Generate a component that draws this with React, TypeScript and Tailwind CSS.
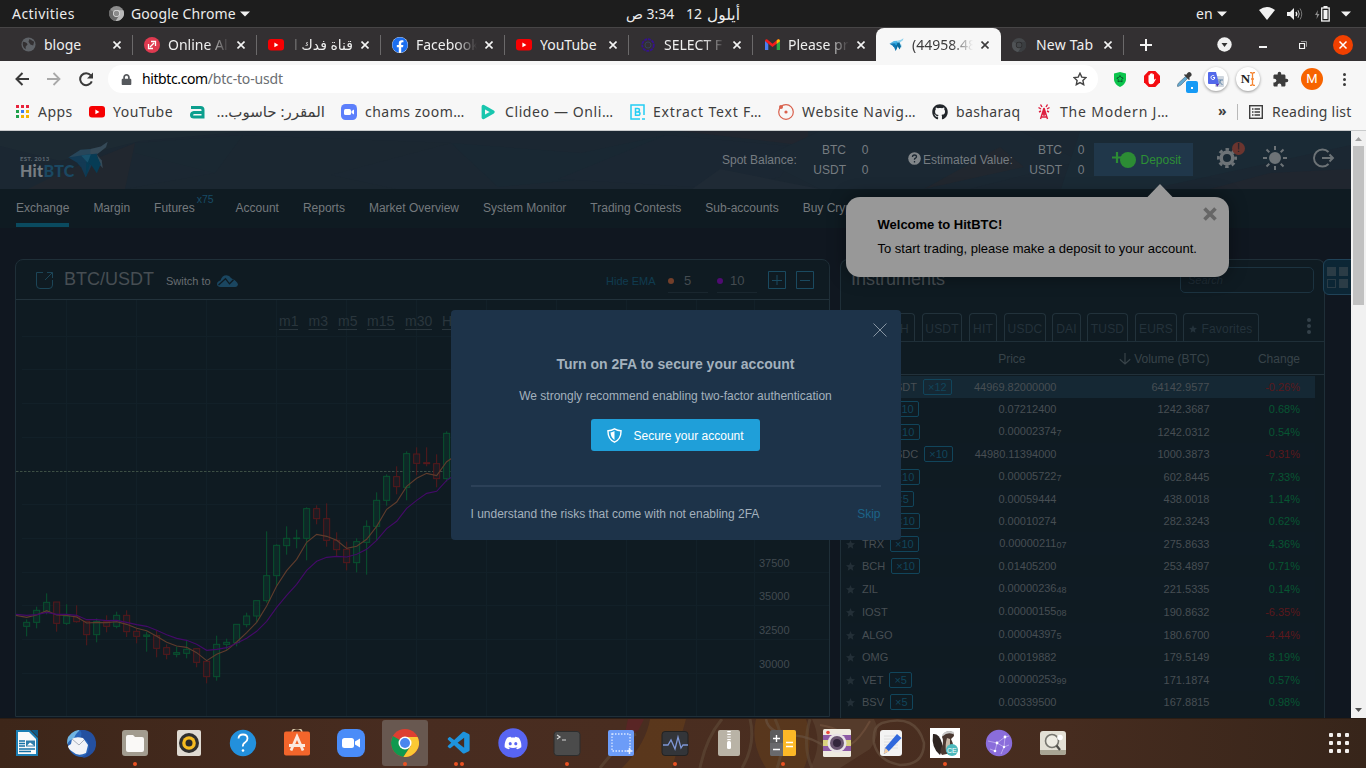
import React from "react";
import { FaGithub, FaFacebook, FaDiscord, FaLock } from "react-icons/fa";
import { MdExtension } from "react-icons/md";
import { VscVscode } from "react-icons/vsc";

const UI = "font-['Noto_Sans','DejaVu_Sans',sans-serif]";

/* ---------- shared glyphs ---------- */
const Caret = ({ className = "" }: { className?: string }) => (
  <svg className={className} width="10" height="6" viewBox="0 0 10 6"><path d="M0 .5h10L5 5.5z" fill="#f2f2f2" /></svg>
);

const ChromeLogo = ({ size, c = ["#dd3f31", "#fbc934", "#10994f", "#4b86ee"], ring = "#fff" }: { size: number; c?: string[]; ring?: string }) => (
  <svg width={size} height={size} viewBox="0 0 28 28">
    <circle cx="14" cy="14" r="14" fill={c[0]} />
    <path d="M14 14L1.9 7A14 14 0 0 0 12.4 27.9L19.5 17z" fill={c[2]} />
    <path d="M14 14l5.6 3.2-7.2 10.7A14 14 0 0 0 26.6 8H14z" fill={c[1]} />
    <circle cx="14" cy="14" r="6.5" fill={ring} />
    <circle cx="14" cy="14" r="5" fill={c[3]} />
  </svg>
);

const YT = () => (
  <svg width="16" height="12" viewBox="0 0 16 12"><rect width="16" height="11.5" rx="3" fill="#f60002" /><path d="M6.4 3.6v4.6l4-2.3z" fill="#fff" /></svg>
);

const Bird = ({ w, h, dim = false }: { w: number; h: number; dim?: boolean }) => {
  const c = dim ? ["#27465a", "#133a54", "#17506b", "#063c55", "#354a58"] : ["#53b8e8", "#1179b5", "#26a3dd", "#086a9c", "#8fd2ee"];
  return (
    <svg width={w} height={h} viewBox="200 26 122 112">
      <path d="M201 76l37-24 30-2 8 18-26 6z" fill={c[0]} />
      <path d="M268 50l32-8 21-14-5 17-28 22-20 2z" fill={c[4]} />
      <path d="M201 76l49-8 40-4-8 30-42 12-12-14z" fill={c[1]} />
      <path d="M288 67l15 18 3 24-10-12z" fill={c[4]} />
      <path d="M256 68l30-2 14 30-12 28-16-24-16-10z" fill={c[3]} />
      <path d="M240 70l30-4-10 26z" fill={c[2]} />
      <path d="M228 92l28-2 16 10-18 37-14-32z" fill={c[1]} />
      <path d="M256 90l10 8-12 39z" fill={c[3]} />
    </svg>
  );
};

/* ---------- desktop top bar ---------- */
const TopBar = () => (
  <div className="flex h-[27px] shrink-0 items-center bg-[#1d1d1d] text-[14px] text-[#ececec]">
    <div className="ml-[12px] w-[97px] whitespace-nowrap tracking-[0.45px]">Activities</div>
    <ChromeLogo size={15} c={["#8c8c8c", "#b9b9b9", "#6a6a6a", "#8b8b8b"]} ring="#e0e0e0" />
    <div className="ml-[7px] w-[104px] whitespace-nowrap tracking-[0.1px]">Google Chrome</div>
    <Caret className="ml-[5px]" />
    <div dir="rtl" className="ml-[376px] flex w-[114px] items-center justify-between whitespace-nowrap text-[14px] leading-[18px]"><span className="flex items-center gap-[5px]"><span className="text-[15.500px]">أيلول</span><span>12</span></span><span className="tracking-[0.15px]">3:34 ص</span></div>
    <div className="ml-[456px] w-[18px]">en</div>
    <Caret className="ml-[3px]" />
    <svg className="ml-[32px]" width="16" height="13" viewBox="0 0 16 13"><path d="M0 3Q8-3 16 3L8 13z" fill="#f2f2f2" /></svg>
    <svg className="ml-[12px]" width="17" height="14" viewBox="0 0 17 14" fill="none" stroke="#f2f2f2"><path d="M0 5h3l4-4v12l-4-4H0z" fill="#f2f2f2" stroke="none" /><path d="M9 5q1.5 2 0 4" strokeWidth="1.5" /><path d="M11 3.200q2.500 3.800 0 7.600" stroke="#bbb" /><path d="M13 1.500q3.500 5.500 0 11" stroke="#777" /></svg>
    <svg className="ml-[11px]" width="15" height="16" viewBox="0 0 15 16"><path d="M3 4L0 9h2l-.5 4 3-5H2.400z" fill="#8d8d8d" /><path d="M8.500 0h4v2h-4z" fill="#f2f2f2" /><rect x="6.700" y="2" width="7.500" height="13" fill="none" stroke="#f2f2f2" strokeWidth="1.300" /><rect x="8.500" y="4" width="4" height="9" fill="#f2f2f2" /></svg>
    <Caret className="ml-[11px]" />
  </div>
);

/* ---------- browser tabs ---------- */
const globe = <svg width="15" height="15" viewBox="0 0 16 16"><circle cx="8" cy="8" r="7.500" fill="#5f6368" /><path d="M2 5q4 0 5 3l-2 2v3q-4-2-3-8M9 2l5 3-1 4-3-1-2-3z" fill="#333032" /></svg>;
const tabs: { icon: React.ReactNode; title: React.ReactNode; rtl?: boolean; active?: boolean }[] = [
  { icon: globe, title: "bloge" },
  { icon: <svg width="16" height="16" viewBox="0 0 16 16"><circle cx="8" cy="8" r="8" fill="#df3a50" /><path d="M4.500 7v4.500H9M11.500 9V4.500H7M6 10l4-4" fill="none" stroke="#fff" strokeWidth="1.300" /></svg>, title: "Online Al" },
  { icon: <YT />, title: "قناة فدك ا", rtl: true },
  { icon: <span className="rounded-full bg-white"><FaFacebook size={16} color="#1b6ef0" /></span>, title: "Facebook" },
  { icon: <YT />, title: "YouTube" },
  { icon: <svg width="14" height="14" viewBox="0 0 14 14" fill="none" stroke="#35128c"><circle cx="7" cy="7" r="5.800" strokeWidth="1.800" strokeDasharray="3 .8" /><circle cx="7" cy="7" r="3" stroke="#34405c" /></svg>, title: "SELECT F" },
  { icon: <svg width="15" height="12" viewBox="0 0 15 12"><path d="M0 1.500V11h3.300V5z" fill="#4b7df0" /><path d="M15 1.500V11h-3.300V5z" fill="#28a745" /><path d="M0 2q0-2 2-1.700l5.500 4.500L13 .3Q15 0 15 2l-7.500 6z" fill="#f21c1c" /><path d="M11.700 1.400L13 .3Q15 0 15 2.300l-3.300 2.800z" fill="#fbbc04" /></svg>, title: "Please pr" },
  { icon: <Bird w={15} h={13} />, title: "(44958.48", active: true },
  { icon: <ChromeLogo size={14} c={["#44474a", "#3b3e41", "#505356", "#44474a"]} ring="#2c2b2c" />, title: "New Tab" },
];

const TabStrip = () => (
  <div className="flex h-[34px] shrink-0 items-stretch border-t border-[#474546] bg-[#333032] pl-[9px] text-[14px]">
    {tabs.map((t, i) => (
      <div key={i} className={t.active ? "-ml-px -mr-px flex w-[125px] items-center rounded-t-lg bg-[#f7f7f7] pl-px text-[#3c3b3c]" : "flex w-[124px] items-center text-[#efefef]"}>
        <span className="flex w-[38px] justify-center">{t.icon}</span>
        <span dir={t.rtl ? "rtl" : "ltr"} className={(t.rtl ? "[mask-image:linear-gradient(to_left,#000_80%,transparent_100%)]" : i === 1 || i === 3 || i === 5 || i === 6 || i === 7 ? "[mask-image:linear-gradient(to_right,#000_65%,transparent_100%)]" : "") + " -ml-[3px] w-[61px] overflow-hidden whitespace-nowrap" + (i === 8 ? " pl-px tracking-[0.2px]" : "")}>{t.title}</span>
        <svg className="ml-[8px]" width="8" height="8" viewBox="0 0 8 8"><path d="M.5.5l7 7M7.500.5l-7 7" stroke={t.active ? "#3c3b3c" : "#f4f4f4"} strokeWidth="1.600" /></svg>
        {!t.active && i !== 6 && <span className="ml-auto h-[20px] w-px bg-[#6b696a]" />}
      </div>
    ))}
    <div className="flex flex-1 items-center">
      <svg className="ml-[16px]" width="12" height="12" viewBox="0 0 12 12"><path d="M6 0v12M0 6h12" stroke="#f4f4f4" strokeWidth="2" /></svg>
      <svg className="ml-[65px]" width="15" height="15" viewBox="0 0 15 15"><circle cx="7.500" cy="7.500" r="7.200" fill="#f1f1f1" /><path d="M4.500 6h6l-3 4z" fill="#333" /></svg>
      <span className="ml-[27px] mt-[5px] h-[1.500px] w-[8px] bg-[#f4f4f4]" />
      <svg className="ml-[32px]" width="8" height="8" viewBox="0 0 8 8" fill="none" stroke="#f4f4f4"><path d="M.5 2.500h5v5h-5z" strokeWidth="1.200" /><path d="M2 .5h5.500v5.300" stroke="#999" /></svg>
      <svg className="ml-[26px]" width="20" height="20" viewBox="0 0 20 20"><circle cx="10" cy="10" r="10" fill="#f14000" /><path d="M6.500 6.500l7 7M13.500 6.500l-7 7" stroke="#fff" strokeWidth="1.500" /></svg>
    </div>
  </div>
);

/* ---------- address bar ---------- */
const Toolbar = () => (
  <div className="flex h-[33px] shrink-0 items-center bg-[#f7f7f7] pt-[3px] text-[14px]">
    <svg className="ml-[15px]" width="14" height="14" viewBox="0 0 14 14" fill="none" stroke="#3a3a3a" strokeWidth="2"><path d="M14 7H1.500M7.500 1L1.500 7l6 6" /></svg>
    <svg className="ml-[18px]" width="14" height="14" viewBox="0 0 14 14" fill="none" stroke="#a9a9a9" strokeWidth="1.800"><path d="M0 7h12.500M6.500 1l6 6-6 6" /></svg>
    <svg className="ml-[18px]" width="15" height="15" viewBox="0 0 15 15"><path d="M12.800 9.300A6 6 0 1 1 11.800 3.300" fill="none" stroke="#3a3a3a" strokeWidth="2" /><path d="M14 .5v6H8z" fill="#3a3a3a" /></svg>
    <div className="ml-[14px] flex h-[28px] w-[990px] items-center rounded-full bg-white">
      <FaLock className="ml-[13px]" size={11} color="#55585c" />
      <span className="-mt-[2px] ml-[10px] tracking-[-0.4px] text-black">hitbtc.com</span><span className="-mt-[2px] tracking-[-0.17px] text-[#6b6e72]">/btc-to-usdt</span>
      <svg className="ml-auto mr-[11px]" width="14" height="14" viewBox="0 0 14 14"><path d="M7 1.200l1.800 3.900 4.200.5-3.100 2.900.8 4.200L7 10.600l-3.700 2.100.8-4.200L1 5.600l4.200-.5z" fill="none" stroke="#444" strokeWidth="1.400" /></svg>
    </div>
    <div className="ml-[6px] flex items-center">
      <span className="flex w-8 justify-center"><svg width="12" height="15" viewBox="0 0 12 15"><path d="M0 1.500L6 0l6 1.500V8q-1 5-6 7-5-2-6-7z" fill="#0bc44c" /><path d="M6 3.500l1.200 2 2 .5-1.400 1.600.3 2.200L6 9l-2 .8.300-2.200L2.800 6l2-.5z" fill="none" stroke="#075c2c" /></svg></span>
      <span className="flex w-8 justify-center"><svg width="16" height="16" viewBox="0 0 16 16"><path d="M4.700 0h6.600L16 4.700v6.600L11.300 16H4.700L0 11.300V4.700z" fill="#f40d12" /><path d="M4.500 7.500V4.500q.7-1 1.300 0V7 3q.7-1 1.400 0v4-4.500q.7-1 1.400 0V7 3.500q.7-1 1.400 0V9l1-1.200q1-.3.7.8l-2 3.500q-1 1.200-3 1.200-2.200 0-2.200-2.500z" fill="#fff" /></svg></span>
      <span className="relative flex w-8 justify-center"><svg width="15" height="15" viewBox="0 0 15 15"><path d="M8.500 4.500l2 2L4 13l-3 1.500L0 14l1.500-3z" fill="#61a9d2" stroke="#5a7285" strokeWidth=".7" /><path d="M7 3l5 5 1-1-1-1 2.500-2.500Q15 1.500 13.500.5t-3 .5L9 3 8 2z" fill="#3b3b3b" /></svg>
        <span className="absolute left-[18px] top-[9px] flex h-[12px] w-[12px] items-center justify-center rounded-[2px] bg-[#169af5]"><span className="mt-[3px] h-[2px] w-[2px] bg-white" /></span></span>
      <span className="flex w-8 justify-center"><span className="flex h-6 w-6 items-center justify-center rounded-full bg-white shadow-[0_1px_3px_rgba(0,0,0,0.4)]"><svg width="16" height="15" viewBox="0 0 16 15"><rect x="7" y="4" width="9" height="11" rx="1" fill="#cfd6de" /><path d="M10 8h5m-2.500 0q0 3-3 5m1-4l4 4" stroke="#5f83a8" fill="none" /><path d="M1 0h7l3 12H1q-1 0-1-1V1q0-1 1-1z" fill="#5268ea" /><path d="M8 12h3l-2 3z" fill="#5130b0" /><path d="M6.800 5.500q0 2-1.800 2a2 2 0 1 1 1.300-3.500M5 5.500h2" stroke="#fff" fill="none" /></svg></span></span>
      <span className="flex w-8 justify-center"><span className="flex h-6 w-6 items-center justify-center rounded-full bg-white font-['Liberation_Serif',serif] text-[13px] font-bold text-[#222] shadow-[0_1px_3px_rgba(0,0,0,0.4)]">N<svg width="5" height="14" viewBox="0 0 5 14"><path d="M0 .7h1.500l1 1 1-1H5M0 13.300h1.500l1-1 1 1H5M2.500 1.500v11M1 7h3" fill="none" stroke="#f58634" strokeWidth="1.300" /></svg></span></span>
      <span className="flex w-8 justify-center"><MdExtension size={17} color="#3c3c3c" /></span>
      <span className="flex w-8 justify-center"><span className="flex h-[22px] w-[22px] items-center justify-center rounded-full bg-[#f76400] font-['Roboto',sans-serif] text-[13px] text-white">M</span></span>
      <span className="flex w-8 flex-col items-center gap-[2px]"><i className="h-[3px] w-[3px] rounded-full bg-[#3c3c3c]" /><i className="h-[3px] w-[3px] rounded-full bg-[#3c3c3c]" /><i className="h-[3px] w-[3px] rounded-full bg-[#3c3c3c]" /></span>
    </div>
  </div>
);

/* ---------- bookmarks ---------- */
const marks: { cls: string; icon: React.ReactNode; label: string; tc: string; rtl?: boolean }[] = [
  { cls: "w-[75px]", tc: "tracking-[0.45px]", label: "Apps", icon: <svg width="13" height="13" viewBox="0 0 13 13">{["#e8233c", "#e8233c", "#e8233c", "#1fa04b", "#3c7df0", "#f5b400", "#1fa04b", "#f5b400", "#f5b400"].map((f, i) => <rect key={i} x={(i % 3) * 5} y={Math.floor(i / 3) * 5} width="3" height="3" fill={f} />)}</svg> },
  { cls: "w-[100px]", tc: "tracking-[0.5px]", label: "YouTube", icon: <YT /> },
  { cls: "w-[152px]", tc: "text-[15px] w-[112px] leading-[18px]", rtl: true, label: "المقرر: حاسوب…", icon: <svg width="15" height="14" viewBox="0 0 15 14"><path d="M1 2.500h9.500q2.500 0 2.500 2.500v7H4q-2.500 0-2.500-2T4 7.500h8" fill="none" stroke="#0c9f8e" strokeWidth="3" /></svg> },
  { cls: "w-[139px]", tc: "tracking-[0.5px]", label: "chams zoom…", icon: <svg width="16" height="16" viewBox="0 0 16 16"><rect width="16" height="16" rx="4.500" fill="#5c7ffb" /><rect x="3" y="5" width="7" height="6" rx="1.500" fill="#fff" /><path d="M10.500 7l2.500-1.500v5L10.500 9z" fill="#fff" /></svg> },
  { cls: "w-[149px]", tc: "ml-[9px] tracking-[0.6px]", label: "Clideo — Onli…", icon: <svg width="15" height="16" viewBox="0 0 15 16"><path d="M2.300 2.500L12 8l-9.700 5.500z" fill="none" stroke="#18c6ae" strokeWidth="3.400" strokeLinejoin="round" /></svg> },
  { cls: "w-[149px]", tc: "tracking-[0.8px]", label: "Extract Text F…", icon: <svg width="15" height="16" viewBox="0 0 15 16"><path d="M14 11V1H1v14h9M12 15h3" fill="none" stroke="#25cdf4" strokeWidth="1.500" /><path d="M5.500 4.500h2.300q1.700 0 1.700 1.600T7.800 7.900H5.500zm0 3.400h2.700q1.800 0 1.800 1.700t-1.800 1.700H5.500z" fill="none" stroke="#25cdf4" strokeWidth="1.500" /></svg> },
  { cls: "w-[154px]", tc: "tracking-[0.65px]", label: "Website Navig…", icon: <svg width="16" height="16" viewBox="0 0 16 16"><circle cx="8" cy="8" r="7.300" fill="none" stroke="#d9604c" strokeWidth="1.200" /><circle cx="8" cy="8" r="1.600" fill="#d9604c" /><circle cx="3" cy="3" r="2" fill="#d9604c" /></svg> },
  { cls: "w-[104px]", tc: "tracking-[0.35px]", label: "basharaq", icon: <FaGithub size={16} color="#22262b" /> },
  { cls: "w-[174px]", tc: "tracking-[0.8px]", label: "The Modern J…", icon: <svg width="14" height="16" viewBox="0 0 14 16" fill="none" stroke="#dd1b3c" strokeWidth="1.400"><path d="M7 4L3.500 15M7 4l3.500 11M5 10h4M4 13h6M7 4v8M4 5L1.500 3.500M10 5l2.500-1.500M4 7L2 8m8-1l2 1M5 3L3.500.5M9 3l1.500-2.500" /></svg> },
];
const Bookmarks = () => (
  <div className="flex h-[36px] shrink-0 items-center bg-[#f7f7f7] pl-[14px] text-[14px] text-[#3e3e3e]">
    {marks.map((m) => (
      <div key={m.label} className={m.cls + " flex shrink-0 items-center whitespace-nowrap"}>
        <span className="-mt-px flex w-4 justify-center">{m.icon}</span>
        <span dir={m.rtl ? "rtl" : "ltr"} className={(m.tc.includes("ml-") ? "" : "ml-2 ") + "-mt-[2px] " + m.tc}>{m.label}</span>
      </div>
    ))}
    <span className="-mt-[3px] ml-[8px] w-[19px] text-[14px] font-bold">»</span>
    <span className="h-4 w-px bg-[#b9b9b9]" />
    <svg className="-mt-px ml-[11px]" width="14" height="14" viewBox="0 0 14 14" fill="none" stroke="#3e3e3e"><rect x=".7" y=".7" width="12.600" height="12.600" strokeWidth="1.400" /><path d="M3 4h1.500M3 7h1.500M3 10h1.500M5.500 4h5.500M5.500 7h5.500M5.500 10h5.500" strokeWidth="1.400" /></svg>
    <span className="-mt-[2px] ml-[9px] whitespace-nowrap tracking-[0.25px]">Reading list</span>
  </div>
);

/* ---------- exchange header ---------- */
const Balance = ({ right }: { right: string }) => (
  <div className={right + " grid grid-cols-[1fr_22.500px] text-right leading-[20px]"}>
    <span>BTC</span><span>0</span><span>USDT</span><span>0</span>
  </div>
);

const SiteHeader = () => (
  <header className="relative h-[58px] shrink-0 bg-[#1b2732] text-[12px] text-[#767c81]">
    <svg className="absolute inset-0" width="1351" height="58" viewBox="0 0 1351 58">
      <path d="M0 0h250L140 10 60 30 0 15z" fill="#1d2a33" />
      <path d="M60 42L135 12l-10 46H28z" fill="#21272f" />
      <path d="M135 12L243 4l90 16-70 20-48 2-80-20z" fill="#1a2832" />
      <path d="M243 4l208 8-120 32 65 14H125l90-16z" fill="#1b2731" />
      <path d="M451 12l130 10 85-18 62 46-120-4-110 10z" fill="#192833" />
      <path d="M666 4l134 12-20 30-52 12-170-10z" fill="#1b2733" />
      <path d="M680 0h128v15z" fill="#21262f" />
      <path d="M692 58l28-20 100 20z" fill="#1f2a35" />
      <path d="M820 0h200l60 30-110 28h-150l-60-30z" fill="#1b2833" />
      <path d="M1000 16l24 20-100 22z" fill="#21272f" />
      <path d="M1080 0h271v14l-200 44h-90z" fill="#1a2a35" />
      <path d="M1210 58l60-16 81-4v20z" fill="#20262f" />
    </svg>
    <div className="relative flex h-full items-center">
      <div className="flex w-[702px] items-start pl-[20px]">
        <div className="w-[48px] pt-[14px]">
          <div className="whitespace-nowrap font-['Lato',sans-serif] text-[6px] font-bold leading-[8px] tracking-[0.3px] text-[#606b72]">EST. 2013</div>
          <div className="whitespace-nowrap font-['Lato',sans-serif] text-[16px] font-black leading-[16px] tracking-[0.3px] text-[#777d82]">Hit<span className="text-[#1b4862]">BTC</span></div>
        </div>
        <Bird w={40} h={37} dim />
      </div>
      <span className="ml-[20px] w-[75px] whitespace-nowrap">Spot Balance:</span>
      <Balance right="w-[71.500px]" />
      <svg className="-mt-1 ml-[39.500px]" width="13" height="13" viewBox="0 0 13 13"><circle cx="6.500" cy="6.500" r="6.300" fill="#81868a" /><path d="M4.500 5q0-2 2-2t2 1.800q0 .8-1 1.300t-1 1.200v.4M6.500 9v1.500" fill="none" stroke="#1b2732" strokeWidth="1.300" /></svg>
      <span className="ml-[2px] w-[90px] whitespace-nowrap">Estimated Value:</span>
      <Balance right="w-[71.500px]" />
      <div className="-mt-px ml-[9.500px] flex h-[33px] w-[99px] items-center bg-[#20374a] text-[12px] text-[#2d8f35]">
        <svg className="ml-[17px]" width="26" height="17" viewBox="0 0 26 17"><circle cx="17" cy="9" r="8" fill="#2c8c34" /><path d="M6 1v11M1 6.500h11" stroke="#2c8c34" strokeWidth="2.200" /></svg>
        <span className="ml-[3.500px] pt-px">Deposit</span>
      </div>
      <div className="relative -mt-[4px] ml-[24px] h-[21px] w-[26px]">
        <svg width="20" height="20" viewBox="0 0 20 20" fill="none" stroke="#6d7377"><circle cx="10" cy="10" r="8.600" strokeWidth="2.800" strokeDasharray="3.500 3.254" strokeDashoffset="1.750" /><circle cx="10" cy="10" r="5.800" strokeWidth="3.600" /></svg>
        <span className="absolute -top-[6px] left-[15px] flex h-[13px] w-[13px] items-center justify-center rounded-full bg-[#6b352f] text-[12px] text-[#1b2028]">!</span>
      </div>
      <svg className="-mt-1 ml-[19px]" width="26" height="26" viewBox="0 0 26 26" stroke="#6d7377" strokeWidth="2"><circle cx="13" cy="13" r="5" fill="#6d7377" /><path d="M13 1v4M13 21v4M1 13h4M21 13h4M4.500 4.500l2.800 2.800M18.700 18.700l2.800 2.800M21.500 4.500l-2.800 2.800M7.300 18.700l-2.800 2.800" /></svg>
      <svg className="-mt-[5px] ml-[25px]" width="22" height="20" viewBox="0 0 22 20" fill="none" stroke="#6d7377" strokeWidth="1.900"><path d="M15.500 4A8.500 8.500 0 1 0 15.500 16M9 10h11M16.500 6.500L20 10l-3.500 3.500" /></svg>
    </div>
  </header>
);

const navItems = ["Exchange", "Margin", "Futures", "Account", "Reports", "Market Overview", "System Monitor", "Trading Contests", "Sub-accounts", "Buy Crypto"];
const Nav = () => (
  <nav className="flex h-[39px] shrink-0 gap-[24px] bg-[#0f1b22] pl-[16px] text-[12px] text-[#74797d]">
    {navItems.map((n, i) => (
      <span key={n} className={i === 0 ? "h-[38px] border-b-4 border-[#0a4a5f] pt-[10px]" : n === "Futures" ? "flex w-[57.500px] pt-[10px]" : "whitespace-nowrap pt-[10px]"}>
        {n}{n === "Futures" && <span className="-mt-[6px] ml-[2px] text-[10.500px] leading-[12px] text-[#174c66]">x75</span>}
      </span>
    ))}
  </nav>
);

/* ---------- chart ---------- */
/* centre x, body top, body bottom, wick top, wick bottom, rising */
const candles: number[][] = [
  [80, 907, 919, 898, 949, 1], [110, 871, 907, 860, 925, 1], [140, 847, 875, 820, 883, 1], [170, 846, 910, 846, 935, 0], [200, 888, 910, 853, 915, 1], [230, 890, 905, 856, 908, 0],
  [260, 904, 944, 904, 976, 0], [290, 904, 944, 895, 967, 1], [320, 905, 919, 886, 937, 0], [350, 886, 919, 875, 925, 1], [380, 886, 935, 871, 951, 0], [410, 934, 949, 925, 970, 0],
  [440, 945, 949, 935, 995, 1], [470, 947, 985, 932, 1012, 0], [500, 983, 1003, 973, 1018, 0], [530, 998, 1003, 980, 1012, 1], [560, 988, 1000, 962, 1015, 1], [590, 986, 1027, 984, 1042, 0],
  [620, 1024, 1070, 1020, 1090, 0], [650, 973, 1070, 947, 1082, 1], [680, 967, 973, 956, 990, 1], [710, 913, 968, 913, 979, 1], [740, 888, 914, 878, 922, 1], [770, 842, 888, 842, 907, 1],
  [800, 767, 842, 634, 848, 1], [830, 676, 767, 673, 797, 1], [860, 655, 677, 619, 704, 1], [890, 654, 656, 629, 685, 1], [920, 566, 655, 562, 721, 1], [950, 566, 596, 556, 613, 0],
  [980, 596, 661, 550, 680, 0], [1010, 661, 689, 637, 709, 0], [1040, 688, 728, 665, 751, 0], [1070, 665, 728, 655, 757, 1], [1100, 619, 667, 601, 764, 1], [1130, 541, 619, 517, 661, 1],
  [1160, 469, 541, 463, 557, 1], [1190, 470, 500, 439, 523, 0], [1220, 401, 502, 394, 541, 1], [1250, 402, 430, 382, 466, 0], [1280, 428, 431, 382, 439, 0], [1310, 431, 476, 403, 502, 0], [1340, 340, 476, 334, 485, 1],
];
const ema5 = "48,886 80,892 110,885 140,872 170,885 200,886 230,891 260,909 290,907 320,908 350,905 380,913 410,925 440,932 470,949 500,967 530,978 560,982 590,998 620,1022 650,1003 680,991 710,966 740,938 770,907 800,858 830,798 860,752 890,718 920,667 950,643 980,649 1010,661 1040,685 1070,679 1100,658 1130,619 1160,568 1190,546 1220,499 1250,475 1280,460 1310,467 1340,425 1370,405";
const ema10 = "48,883 80,886 110,884 140,877 170,883 200,883 230,886 260,899 290,899 320,902 350,901 380,907 410,914 440,919 470,931 500,944 530,955 560,961 590,973 620,991 650,988 680,983 710,970 740,955 770,934 800,904 830,862 860,826 890,793 920,751 950,724 980,712 1010,709 1040,711 1070,703 1100,688 1130,661 1160,626 1190,604 1220,565 1250,541 1280,520 1310,514 1340,481 1370,462";

const Chart = () => (
  <svg width="813" height="416" viewBox="16 300 813 416" className="block">
    {[66.5, 136.5, 206.5, 276.5, 346.5, 416.5, 486.5, 556.5, 626.5, 696.5, 754.5].map((x) => <path key={x} d={`M${x} 300V716`} stroke="#122028" />)}
    {[336.5, 369.5, 403.5, 437.5, 504.5, 538.5, 572.5, 605.5, 639.5, 673.5].map((y) => <path key={y} d={`M22 ${y}H829`} stroke="#122028" />)}
    <path d="M16 471.500H829" stroke="#3d4f45" strokeDasharray="2.500 1.500" />
    <g transform="translate(0 320) scale(.33333)" strokeWidth="3">
      {candles.map(([x, t, b, wt, wb, up]) => (
        <g key={x} stroke={up ? "#08532f" : "#57191c"} fill={up ? "#0e2827" : "#1d1c23"}>
          <path d={`M${x} ${wt}V${t}M${x} ${b}V${wb}`} strokeWidth="3" />
          <rect x={x - 9} y={t} width="18" height={Math.max(2, b - t)} />
        </g>
      ))}
      <polyline points={ema5} fill="none" stroke="#5f3c2c" strokeWidth="3.400" />
      <polyline points={ema10} fill="none" stroke="#440a68" strokeWidth="3.400" />
    </g>
    <g className="font-['Liberation_Sans',Arial,sans-serif] text-[14px]" fill="#2a363d">
      {([["m1", 279, 19], ["m3", 308.500, 19], ["m5", 338, 19], ["m15", 367, 28], ["m30", 405, 27], ["H1", 442, 18]] as [string, number, number][]).map(([l, x, w]) => (
        <g key={l}><text x={x} y="326">{l}</text><rect x={x} y="329" width={w} height="1" /></g>
      ))}
    </g>
    <g className="font-['Liberation_Sans',Arial,sans-serif] text-[11px]" fill="#414a50">
      <text x="759" y="567">37500</text><text x="759" y="600">35000</text><text x="759" y="634">32500</text><text x="759" y="668">30000</text>
    </g>
  </svg>
);

const ChartPanel = () => (
  <section className="h-[458px] w-[815px] shrink-0 rounded-t-[8px] border border-[#1f2f38] bg-[#0f1b22]">
    <div className="flex h-[40px] items-center border-b border-[#22323b] text-[11px]">
      <svg className="ml-[20px] mt-[2px]" width="17" height="17" viewBox="0 0 17 17" fill="none" stroke="#1c4557"><path d="M7 .5H.5V13q0 3.500 3.500 3.500h9q3.500 0 3.500-3.500V8M11 .5h5.500V6M16.500.5L9 8" /></svg>
      <span className="ml-[11px] w-[90px] text-[18px] text-[#474e53]">BTC/USDT</span>
      <span className="ml-[12px] mt-[3px] w-[45px] whitespace-nowrap text-[#686d71]">Switch to</span>
      <svg className="ml-[6px] mt-[3px]" width="21" height="12" viewBox="0 0 21 12"><path d="M3.500 12Q0 11.500 0 9t3.500-3.500Q5 .2 9.500.2q3 0 4.500 2.800l1.500 1Q20 6 21 9.500q-.3 2-2.500 2.500z" fill="#1a4660" /><path d="M1.500 10L8.500 3.800l4 5 4-4" fill="none" stroke="#0f1b22" strokeWidth="1.300" /></svg>
      <span className="ml-[368px] mt-[4px] w-[62px] whitespace-nowrap text-[#0f3c50]">Hide EMA</span>
      <span className="mt-[4px] flex h-[22px] w-[40px] items-center border-b border-[#19262e] text-[13px] text-[#444b50]"><i className="h-[6px] w-[6px] rounded-full bg-[#733f2a]" /><span className="ml-[10px]">5</span></span>
      <span className="ml-[9px] mt-[4px] flex h-[22px] w-[40px] items-center border-b border-[#19262e] text-[13px] text-[#444b50]"><i className="h-[6px] w-[6px] rounded-full bg-[#4f0b72]" /><span className="ml-[7px]">10</span></span>
      <svg className="ml-[11px] mt-px" width="46" height="18" viewBox="0 0 46 18" fill="none" stroke="#1a4a60"><path d="M.5.5h17v17H.5zM9 4v10M4 9.500h10M28.500.5h17v17h-17zM32 9.500h10" /></svg>
    </div>
    <Chart />
  </section>
);

/* ---------- instruments ---------- */
type Row = [string, string, string, string, string, string];
const rows: Row[] = [
  ["BTC/USDT", "12", "44969.82000000", "", "64142.9577", "-0.26%"],
  ["ETH", "10", "0.07212400", "", "1242.3687", "0.68%"],
  ["XRP", "10", "0.00002374", "7", "1242.0312", "0.54%"],
  ["BTC/USDC", "10", "44980.11394000", "", "1000.3873", "-0.31%"],
  ["ADA", "10", "0.00005722", "7", "602.8445", "7.33%"],
  ["DOT", "5", "0.00059444", "", "438.0018", "1.14%"],
  ["EOS", "10", "0.00010274", "", "282.3243", "0.62%"],
  ["TRX", "10", "0.00000211", "07", "275.8633", "4.36%"],
  ["BCH", "10", "0.01405200", "", "253.4897", "0.71%"],
  ["ZIL", "", "0.00000236", "48", "221.5335", "0.14%"],
  ["IOST", "", "0.00000155", "08", "190.8632", "-6.35%"],
  ["ALGO", "", "0.00004397", "5", "180.6700", "-4.44%"],
  ["OMG", "", "0.00019882", "", "179.5149", "8.19%"],
  ["VET", "5", "0.00000253", "99", "171.1874", "0.57%"],
  ["BSV", "5", "0.00339500", "", "167.8815", "0.98%"],
];
const Star = ({ f, s = 9 }: { f: string; s?: number }) => (
  <svg width={s} height={s} viewBox="0 0 10 10"><path d="M5 0l1.400 3.400 3.600.3-2.700 2.400.8 3.600L5 7.800 1.900 9.700l.8-3.600L0 3.700l3.600-.3z" fill={f} /></svg>
);
const ccy: [string, string][] = [["BTC", "w-[28px] mr-0"], ["ETH", "w-[37px] mr-[7px]"], ["USDT", "w-[40px] mr-[7px]"], ["HIT", "w-[28px] mr-[7px]"], ["USDC", "w-[42px] mr-[6px]"], ["DAI", "w-[29px] mr-[6px]"], ["TUSD", "w-[41px] mr-[7px]"], ["EURS", "w-[42px] mr-[6px]"]];

const Instruments = () => (
  <section className="ml-[10px] flex h-[460px] w-[485px] shrink-0 flex-col overflow-hidden rounded-t-[8px] border border-b-0 border-[#1f2f38] bg-[#0f1b22]">
    <div className="flex h-[53px] shrink-0 items-center">
      <span className="ml-[10px] mt-[-14px] flex-1 text-[18px] text-[#474e53]">Instruments</span>
      <span className="mr-[10px] mt-[-13px] flex h-[26px] w-[134px] items-center rounded-[5px] border border-[#1c3340] pl-[7px] text-[11px] italic text-[#1f2c35]">Search</span>
    </div>
    <div className="flex h-[29px] shrink-0 border-b border-[#1f2f38] pl-[9px] text-[12px] text-[#24323b]">
      {ccy.map(([c, w]) => (
        <span key={c} className={w + " flex shrink-0 items-center justify-center rounded-t-[4px] border border-b-0 border-[#22323b] pt-[2px] tracking-[0.2px]"}>{c}</span>
      ))}
      <span className="flex w-[76px] items-center justify-center gap-[4px] rounded-t-[4px] border border-b-0 border-[#22323b] pt-[2px] tracking-[0.2px]"><Star f="#24323b" s={8} />Favorites</span>
      <span className="ml-[48px] flex flex-col gap-[2px] pt-[5px]"><i className="h-[4px] w-[4px] rounded-full bg-[#34414a]" /><i className="h-[4px] w-[4px] rounded-full bg-[#34414a]" /><i className="h-[4px] w-[4px] rounded-full bg-[#34414a]" /></span>
    </div>
    <div className="flex h-[33px] shrink-0 items-center border-b border-[#22313a] pt-px text-[12px] text-[#384349]">
      <span className="w-[184.500px] text-right">Price</span>
      <span className="flex w-[184px] items-center justify-end gap-[3px]"><svg width="12" height="12" viewBox="0 0 12 12" fill="none" stroke="#384349"><path d="M6 0v11M.8 6.300L6 11l5.200-4.700" strokeWidth="1.200" /></svg>Volume (BTC)</span>
      <span className="w-[90.500px] text-right">Change</span>
    </div>
    <div className="shrink-0 pt-px text-[11px] text-[#474e53]">
      {rows.map(([n, x, p, s, v, c], i) => (
        <div key={n} className={(i === 0 ? "bg-[#152834] " : i % 2 ? "bg-[#0f1b23] " : "") + (s || n === "ALGO" ? "h-[23px] pt-px " : "h-[22px] ") + "flex w-[474px] items-center"}>
          <span className="flex w-[21px] pl-[5px]"><Star f="#232f37" /></span>
          <span className="flex w-[95px] items-center gap-[5.500px] whitespace-nowrap">{n}{x && <span className="flex h-[16px] items-center rounded-[2px] border border-[#11455b] px-[4.500px] text-[#11455b]">×{x}</span>}</span>
          <span className={(s ? "-mt-[2px] " : "") + "w-[99.500px] text-right"}>{p}</span>
          <span className="mt-px w-[14px] text-[9px] leading-[12px]">{s}</span>
          <span className="w-[139px] text-right">{v}</span>
          <span className={(c[0] === "-" ? "text-[#5b181c]" : "text-[#075532]") + " w-[90.500px] text-right"}>{c}</span>
        </div>
      ))}
    </div>
  </section>
);

/* ---------- overlays ---------- */
const Welcome = () => (
  <div className="absolute left-[846px] top-[66px] h-[80px] w-[383px] rounded-[14px] bg-[#989898] pl-[31.500px] pt-[18px] text-[13px] text-black shadow-[0_0_18px_rgba(0,0,0,0.4)]">
    <svg className="absolute -top-[13px] left-[301px]" width="26" height="14" viewBox="0 0 26 14"><path d="M0 13.500L13 0l13 13.500z" fill="#989898" /></svg>
    <svg className="absolute left-[357px] top-[10px]" width="14" height="14" viewBox="0 0 14 14"><path d="M1.500 1.500l11 11M12.500 1.500l-11 11" stroke="#666" strokeWidth="3.600" /></svg>
    <div className="font-bold leading-[20px]">Welcome to HitBTC!</div>
    <div className="mt-[4px] whitespace-nowrap leading-[20px]">To start trading, please make a deposit to your account.</div>
  </div>
);

const Modal = () => (
  <div className="absolute left-[451px] top-[178.500px] flex h-[230.500px] w-[450px] flex-col items-center rounded-[4px] bg-[#1d3349] pr-px text-[12px] text-[#a3b1bd]">
    <svg className="absolute left-[422px] top-[13px]" width="14" height="14" viewBox="0 0 14 14"><path d="M.5.5l13 13M13.500.5l-13 13" stroke="#8795a2" /></svg>
    <div className="mt-[44.500px] text-[14px] font-bold leading-[20px]">Turn on 2FA to secure your account</div>
    <div className="mt-[14px] leading-[16px]">We strongly recommend enabling two-factor authentication</div>
    <button className="mt-[15px] flex h-[32px] w-[169px] items-center rounded-[3px] bg-[#1f9fd9] pl-[16px] text-white">
      <svg width="15" height="15" viewBox="0 0 15 15"><path d="M7.500.8q3.500 2 6.500 1.900.3 8.300-6.500 11.500Q.7 11 1 2.700q3 .1 6.500-1.900z" fill="none" stroke="#fff" strokeWidth="1.400" /><path d="M7.500 3Q5.500 4.200 3.500 4.400q.3 5 4 7.500z" fill="#fff" /></svg>
      <span className="ml-[11.500px] pt-px">Secure your account</span>
    </button>
    <div className="mt-[34px] h-[2px] w-[410px] bg-[#2c4158]" />
    <div className="mt-[18px] flex w-[410px] justify-between leading-[18px]"><span>I understand the risks that come with not enabling 2FA</span><span className="text-[#1c6388]">Skip</span></div>
  </div>
);

const Site = () => (
  <div className="relative flex h-[587px] w-[1351px] flex-col overflow-hidden bg-[#101720] font-['Liberation_Sans',Arial,sans-serif]">
    <SiteHeader />
    <Nav />
    <div className="flex pl-[15px] pt-[31px]">
      <ChartPanel />
      <Instruments />
      <div className="-ml-[2px] grid h-[36px] w-[32px] shrink-0 grid-cols-[9px_9px] content-center gap-[3px] rounded-l-[6px] border border-[#204358] bg-[#0c2635] pl-[3px]">
        <i className="h-[9px] w-[9px] bg-[#2b3c46]" /><i className="h-[9px] w-[9px] bg-[#2b3c46]" /><i className="h-[9px] w-[9px] border border-[#2b3c46]" /><i className="h-[9px] w-[9px] bg-[#2b3c46]" />
      </div>
    </div>
    <Welcome />
    <Modal />
  </div>
);

const Scrollbar = () => (
  <div className="flex w-[15px] flex-col items-center bg-[#f1f1f1]">
    <svg className="mt-[6px]" width="7" height="4" viewBox="0 0 7 4"><path d="M0 4h7L3.500 0z" fill="#a0a0a0" /></svg>
    <span className="mt-[5px] h-[159px] w-[11px] bg-[#c1c1c1]" />
    <svg className="mb-[6px] mt-auto" width="7" height="4" viewBox="0 0 7 4"><path d="M0 0h7L3.500 4z" fill="#505050" /></svg>
  </div>
);

/* ---------- dock ---------- */
const S = ({ children, s = 28 }: { children: React.ReactNode; s?: number }) => <svg width={s} height={s} viewBox="0 0 28 28">{children}</svg>;
const dock: { icon: React.ReactNode; dots?: number; on?: boolean }[] = [
  { icon: <S><path d="M3 1h14l8 8v18H3z" fill="#1c7fb5" /><path d="M5 3h11l7 7v15H5z" fill="#fafafa" /><path d="M18 1h7v7z" fill="#0f5d8a" /><path d="M6 12h6M6 14.500h6M6 17h6M6 20h16M6 22.500h12" stroke="#1472a6" strokeWidth="1.300" /><path d="M13 11.500h9v6h-9z" fill="#2e7dab" /><path d="M14 16.500l3-3 4 3z" fill="#fff" /></S> },
  { icon: <svg width="31" height="31" viewBox="0 0 31 31"><circle cx="15.500" cy="15.500" r="13.500" fill="#2a66ba" /><path d="M1 17Q0 7 9 3q6-2 4 0-4 3-5 8-5 0-7 6z" fill="#6fb4e2" /><path d="M14 2q14-1 16 12 1 9-7 14-5 3-7 1 7-3 7-10 0-8-9-9 3-4-0-8z" fill="#2450a0" /><path d="M6 11q4-3 11-1l5 7-2 8q-8 4-13-1-5-3-5-6l3-2z" fill="#f3f4f7" /><path d="M6 11l7 6 5-5" fill="none" stroke="#aab0bb" /></svg> },
  { dots: 1, icon: <S><rect x="1" y="1" width="26" height="26" rx="3" fill="#a29c8f" /><path d="M5 8q0-2 2-2h5l2 2h7q2 0 2 2v11q0 2-2 2H7q-2 0-2-2z" fill="#faf9f7" /></S> },
  { icon: <S><rect x="2" y="1" width="24" height="26" rx="2" fill="#dfdad2" /><circle cx="14" cy="14" r="10" fill="#2f2f2f" /><circle cx="14" cy="14" r="6.800" fill="#f6bb21" /><circle cx="14" cy="14" r="3.500" fill="#2a2a2a" /></S> },
  { icon: <S><circle cx="14" cy="14" r="13.200" fill="#2390dc" /><path d="M9.500 9.500q.3-4 4.500-4 4.500 0 4.500 4 0 2.500-2.500 4t-2 4" fill="none" stroke="#fff" strokeWidth="1.800" /><circle cx="14" cy="21.500" r="1.300" fill="#fff" /></S> },
  { icon: <S><path d="M9 4q0-4.500 5-4.500T19 4" fill="none" stroke="#d9c9a8" strokeWidth="1.500" /><rect x="1" y="2.500" width="26" height="24" rx="2" fill="#f3652b" /><path d="M8 21.500l6-14 6 14M6 16.500h16" fill="none" stroke="#fbe9df" strokeWidth="2.800" /></S> },
  { icon: <S><rect width="28" height="28" rx="8" fill="#4a8cf8" /><rect x="5" y="9" width="12" height="10" rx="2.500" fill="#fff" /><path d="M18 12.500l5-3v9l-5-3z" fill="#fff" /></S> },
  { dots: 1, on: true, icon: <ChromeLogo size={28} /> },
  { dots: 2, icon: <VscVscode size={27} color="#1e93dd" /> },
  { icon: <S s={30}><circle cx="14" cy="14" r="13.700" fill="#5865f2" /><g transform="translate(5.500 5.500)"><FaDiscord size={17} color="#fff" /></g></S> },
  { dots: 1, icon: <S><rect x="1" y="2.500" width="26" height="24" rx="3" fill="#4b4b4b" stroke="#2d2d2d" /><path d="M4 6l3 2-3 2M9 11h4" fill="none" stroke="#d5d5d5" strokeWidth="1.200" /></S> },
  { icon: <S><rect x="1" y="1" width="26" height="26" rx="2" fill="#6c9cf8" /><path d="M5 5h18v17H5z" fill="none" stroke="#d9e6ff" strokeWidth="1.300" strokeDasharray="1.500 1.500" /><path d="M22.500 19v6M19.500 22h6" stroke="#e6efff" strokeWidth="1.600" /></S> },
  { dots: 1, icon: <S><rect x="1" y="2.500" width="26" height="24" rx="3" fill="#333539" stroke="#222" /><path d="M2 16h5l3-5 4 9 3-12 3 11 2-3h5" fill="none" stroke="#7f97d6" strokeWidth="1.300" /></S> },
  { icon: <S><rect x="3" y="1" width="22" height="26" rx="2" fill="#b9b3a6" /><path d="M14 2v10" stroke="#fff" strokeWidth="3.500" strokeDasharray="1.200 1.500" /><rect x="12" y="12" width="4" height="8" rx="1.500" fill="#fff" /></S> },
  { dots: 1, icon: <S><rect x="1" y="1" width="26" height="26" rx="2" fill="#5b5b5d" /><path d="M14 1h11q2 0 2 2v22q0 2-2 2H14z" fill="#fcb826" /><path d="M1 14h13v13H3q-2 0-2-2z" fill="#69696c" /><path d="M7.500 6v7M4 9.500h7M4 20.500h7M17 13.500h7M17 17.500h7" stroke="#fff" strokeWidth="1.400" /></S> },
  { icon: <S><rect x="0" y="0" width="28" height="28" rx="1.500" fill="#efebe0" /><path d="M0 6h28v5H0zM0 17h28v5H0z" fill="#8d5aa5" /><path d="M0 11h28v6H0z" fill="#d9d37f" /><circle cx="14" cy="14" r="9.500" fill="#e9e3e6" /><circle cx="14" cy="14" r="7" fill="#6a5670" /><circle cx="14" cy="14" r="4" fill="#33263b" /><circle cx="5" cy="3.500" r="1.800" fill="#ed4b3d" /></S> },
  { icon: <S><rect x="3" y="1" width="22" height="26" rx="3" fill="#f3f3f3" /><path d="M7 7h14M7 10h14M7 13h14M7 16h14M7 19h14" stroke="#dedede" /><path d="M20 5l4.500 4L12 22l-5 3 1-6z" fill="#3068dc" /><path d="M8.500 19l3.500 3.500L6.500 25z" fill="#f3cfa4" /></S> },
  { dots: 1, icon: <svg width="30" height="30" viewBox="0 0 30 30"><path d="M0 0h30v30H0z" fill="#fff" /><path d="M3 6q6-1 9 9 1 6-2 12Q1 20 3 6z" fill="#2d2421" /><path d="M12 9q2-6 8-6 4 1 4 5l-3 3q4 7 0 14l-9 2q-3-4 0-9 2-5 0-9z" fill="#4a3831" /><path d="M17 10l3 1v10l-4 3q-1-8 1-14z" fill="#c8b8a8" /><path d="M12 7q4-6 12-3l-1 2q-6-2-10 2z" fill="#c9c9c9" /><circle cx="22" cy="22" r="6" fill="#4cb8bc" /><text x="17" y="24.500" className="font-['Liberation_Sans',Arial,sans-serif] text-[7px]" fill="#fff">CE</text></svg> },
  { icon: <S><circle cx="14" cy="14" r="13.200" fill="#8a6ddb" /><path d="M3 12l9 2 8-6M12 14l-2 8M12 14l7 4 5-2M19 18l-3 7M20 8l-1 10M20 8l4-1M10 22l-5-2" stroke="#c5b5f0" fill="none" strokeWidth=".8" /><circle cx="12" cy="14" r="1.400" fill="#fff" /><circle cx="20" cy="8" r="1.400" fill="#fff" /><circle cx="10" cy="22" r="1.300" fill="#fff" /><circle cx="19" cy="18" r="1.200" fill="#fff" /></S> },
  { icon: <S><rect x="1" y="2" width="26" height="24" rx="3" fill="#e3e0d5" /><path d="M1 21h26v3q0 2-2 2H3q-2 0-2-2z" fill="#a9a594" /><circle cx="13" cy="12" r="6.500" fill="#eeece3" stroke="#77766f" strokeWidth="1.600" /><path d="M17.500 16.500l3.500 4.500" stroke="#4f4e4a" strokeWidth="2.200" /><circle cx="21" cy="8.500" r="2.800" fill="#fff" /></S> },
];

const Dock = () => (
  <div className="relative h-[50px] shrink-0 bg-[linear-gradient(90deg,#3d2619_0%,#482c20_30%,#4a2e20_62%,#462c1f_78%,#37251a_100%)] shadow-[inset_0_1px_0_#2b1d14]">
    <svg className="absolute inset-x-0 top-px" width="1366" height="49" viewBox="0 0 1366 49" fill="none">
      <path d="M628 0h16l-6 12-14 6z" fill="#64202a" opacity=".6" />
      <path d="M650 0h36l-14 49h-50q24-24 28-49z" fill="#6b4118" opacity=".5" />
      <path d="M756 0h50q8 26-2 49h-38q-16-24-10-49z" fill="#6b421b" opacity=".45" />
      <path d="M600 49q22-28 36-34M700 49q6-30 22-49M742 49q14-24 8-49M775 0q12 24 2 49M812 49q-10-22-2-49" stroke="#64503c" strokeWidth="3" opacity=".5" />
      <path d="M812 0h62q8 14-4 30l-30 19h-30q14-24 2-49z" fill="#5d4434" opacity=".6" />
      <path d="M882 4q34-10 42 20 0 22-24 22-22-4-26-22-2-16 8-20M766 0q2 14 26 16 22 2 36 14" stroke="#66503f" strokeWidth="2.500" opacity=".7" />
      <path d="M820 6q26 4 30 20 10-6 20-24" stroke="#7c5a43" strokeWidth="2" opacity=".5" />
    </svg>
    <div className="relative flex h-full items-center">
      {dock.map((d, i) => (
        <div key={i} className="flex h-full w-[54px] shrink-0 items-center justify-center">
          <span className={(d.on ? "bg-[#685850] " : "") + "relative flex h-[46px] w-[46px] items-center justify-center rounded-[3px]"}>
            {d.icon}
            {d.dots && <span className="absolute bottom-0 flex gap-[2px]">{Array.from({ length: d.dots }, (_, k) => <i key={k} className="h-[4px] w-[4px] rounded-full bg-[#ea5223]" />)}</span>}
          </span>
        </div>
      ))}
      <div className="ml-auto mr-[17px] grid grid-cols-3 gap-[4px]">
        {Array.from({ length: 9 }, (_, k) => <i key={k} className="h-[4px] w-[4px] rounded-[1px] bg-[#f3f0ee]" />)}
      </div>
    </div>
  </div>
);

export default function App() {
  return (
    <div className={UI + " flex h-[768px] w-[1366px] flex-col overflow-hidden bg-black"}>
      <TopBar />
      <TabStrip />
      <Toolbar />
      <Bookmarks />
      <div className="h-px shrink-0 bg-[#c9cbcc]" />
      <div className="flex h-[587px] shrink-0"><Site /><Scrollbar /></div>
      <Dock />
    </div>
  );
}
